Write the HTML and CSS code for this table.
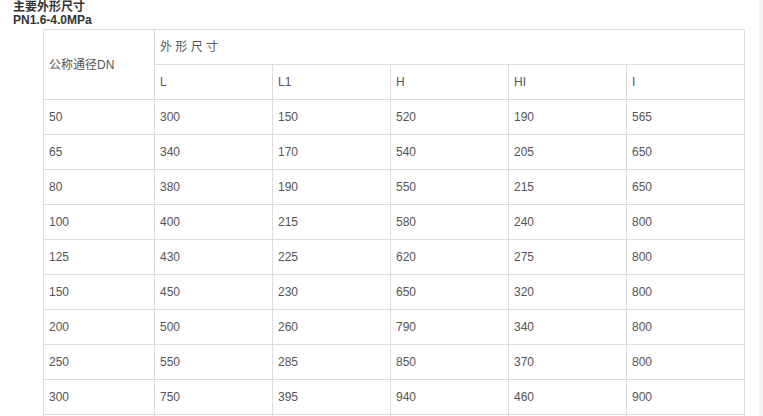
FILE: index.html
```html
<!DOCTYPE html>
<html lang="zh">
<head>
<meta charset="utf-8">
<title>主要外形尺寸</title>
<link rel="stylesheet" href="styles.css">
</head>
<body>
<div class="page">
  <h3 class="title">主要外形尺寸<br>PN1.6-4.0MPa</h3>
  <table class="dims">
    <colgroup>
      <col class="c-dn"><col class="c"><col class="c"><col class="c"><col class="c"><col class="c">
    </colgroup>
    <tr><td rowspan="2">公称通径DN</td><td colspan="5">外 形 尺 寸</td></tr>
    <tr><td>L</td><td>L1</td><td>H</td><td>HI</td><td>I</td></tr>
    <tr><td>50</td><td>300</td><td>150</td><td>520</td><td>190</td><td>565</td></tr>
    <tr><td>65</td><td>340</td><td>170</td><td>540</td><td>205</td><td>650</td></tr>
    <tr><td>80</td><td>380</td><td>190</td><td>550</td><td>215</td><td>650</td></tr>
    <tr><td>100</td><td>400</td><td>215</td><td>580</td><td>240</td><td>800</td></tr>
    <tr><td>125</td><td>430</td><td>225</td><td>620</td><td>275</td><td>800</td></tr>
    <tr><td>150</td><td>450</td><td>230</td><td>650</td><td>320</td><td>800</td></tr>
    <tr><td>200</td><td>500</td><td>260</td><td>790</td><td>340</td><td>800</td></tr>
    <tr><td>250</td><td>550</td><td>285</td><td>850</td><td>370</td><td>800</td></tr>
    <tr><td>300</td><td>750</td><td>395</td><td>940</td><td>460</td><td>900</td></tr>
    <tr><td></td><td></td><td></td><td></td><td></td><td></td></tr>
  </table>
</div>
<div class="edge"></div>
</body>
</html>
```
FILE: styles.css
```css
html, body {
  margin: 0;
  padding: 0;
  background: #fff;
  overflow: hidden;
}
.page {
  padding: 1px 0 0 13px;
  font-family: "Liberation Sans", "Noto Sans CJK SC", sans-serif;
  font-size: 12px;
  color: #555;
}
.title {
  margin: 0 0 2px 0;
  font-size: 12px;
  line-height: 13px;
  font-weight: bold;
  color: #333;
}
.dims {
  margin-left: 30px;
  border-collapse: collapse;
  table-layout: fixed;
  width: 702px;
}
.c-dn { width: 111px; }
.c { width: 118px; }
.dims td {
  border: 1px solid #dcdcdc;
  height: 35px;
  padding: 0 5px;
  box-sizing: border-box;
  line-height: 14px;
  text-align: left;
  vertical-align: middle;
  color: #555;
}
.edge {
  position: fixed;
  top: 0;
  right: 0;
  bottom: 0;
  width: 4px;
  background: #f4f4f4;
}
```
